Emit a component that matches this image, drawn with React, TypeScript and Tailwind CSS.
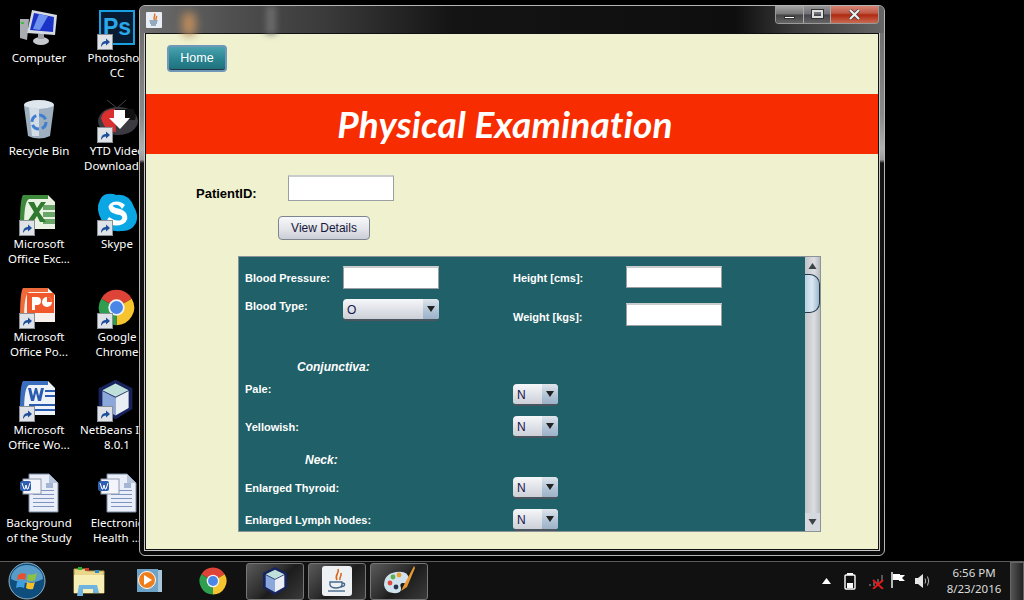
import type { ReactNode } from "react";

const ui = "font-['Noto_Sans','Liberation_Sans',sans-serif]";
const form = "font-['Liberation_Sans',Arial,sans-serif]";

function Shortcut() {
  return (
    <svg className="absolute bottom-0 left-[4px]" width="16" height="16" viewBox="0 0 16 16">
      <rect x="0.5" y="0.5" width="15" height="15" fill="#dfe3e8" stroke="#8a8f96" />
      <path d="M4 13c0-4 2-6 5-6V4.5L13 8l-4 3.5V9.5c-2 0-3.5 1-5 3.5z" fill="#1f4f9a" />
    </svg>
  );
}

function ChromeMark({ size }: { size: number }) {
  return (
    <svg width={size} height={size} viewBox="0 0 48 48">
      <path d="M24 24L8.4 15A18 18 0 0 1 39.6 15Z" fill="#dd4437" />
      <path d="M24 24L39.6 15A18 18 0 0 1 24 42Z" fill="#f6c42e" />
      <path d="M24 24L24 42A18 18 0 0 1 8.4 15Z" fill="#2f9e4f" />
      <circle cx="24" cy="24" r="8.4" fill="#f2f2f2" />
      <circle cx="24" cy="24" r="6.6" fill="#4a86e8" />
    </svg>
  );
}

function Cube({ size }: { size: number }) {
  return (
    <svg width={size} height={size} viewBox="0 0 48 48">
      <path d="M24 3L42 12V34L24 45L6 34V12Z" fill="#16235c" />
      <path d="M24 7L38 14L24 21L10 14Z" fill="#bfe0da" />
      <path d="M10 15L24 22V41L10 33Z" fill="#8aa8dc" />
      <path d="M38 15L24 22V41L38 33Z" fill="#e9eef5" />
    </svg>
  );
}

function DocIcon({ children, tone }: { children: ReactNode; tone: string }) {
  return (
    <svg width="48" height="45" viewBox="0 0 48 45">
      <path d="M8 4H33L40 11V38H18L8 36Z" fill={tone} />
      {children}
    </svg>
  );
}

const icons: Record<string, ReactNode> = {
  computer: (
    <svg width="48" height="45" viewBox="0 0 48 45">
      <path d="M5 14H14L12 35L5 33Z" fill="#a9adb2" />
      <rect x="6" y="17" width="3" height="2" fill="#3cc23c" />
      <path d="M17 5L42 10L40 30L12 28Z" fill="#d6dbe2" />
      <path d="M19 8L39 12L38 27L15 25Z" fill="#1c33c8" />
      <path d="M24 9L33 11L25 25L18 24Z" fill="#6f93ee" />
      <ellipse cx="26" cy="36" rx="8" ry="4" fill="#c7cbd0" />
      <rect x="23" y="29" width="6" height="5" fill="#9ea2a8" />
    </svg>
  ),
  recycle: (
    <svg width="48" height="45" viewBox="0 0 48 45">
      <ellipse cx="24" cy="7" rx="15" ry="5" fill="#dfe7ee" />
      <path d="M9 8L13 38Q24 43 35 38L39 8Q24 14 9 8Z" fill="#9eb0c0" />
      <path d="M14 9L17 38H24V11Z" fill="#d3dde6" />
      <circle cx="24" cy="24" r="7" fill="none" stroke="#3f7ed0" strokeWidth="3" strokeDasharray="8 3" />
    </svg>
  ),
  ytd: (
    <svg width="48" height="45" viewBox="0 0 48 45">
      <path d="M14 2L24 10L33 2" fill="none" stroke="#444" strokeWidth="1" />
      <ellipse cx="25" cy="23" rx="20" ry="14" fill="#3a3a40" />
      <path d="M8 20Q10 11 22 11L23 34Q12 34 8 20Z" fill="#d92f2f" />
      <path d="M22 11H40Q44 17 42 22H22Z" fill="#111" />
      <path d="M21 12H32V20H37L27 31L16 20H21Z" fill="#fff" />
    </svg>
  ),
  excel: (
    <DocIcon tone="#e9f2e3">
      <path d="M8 4H33V8H14Q9 10 9 36L5 34Q5 8 8 4Z" fill="#3d8a3d" />
      <rect x="28" y="14" width="12" height="5" fill="#6aa66a" />
      <rect x="28" y="21" width="12" height="5" fill="#6aa66a" />
      <rect x="28" y="28" width="12" height="5" fill="#6aa66a" />
      <path d="M13 11H19L22 17L26 11H31L24 21L31 31H25L22 25L18 31H12L19 21Z" fill="#2f7a2f" />
    </DocIcon>
  ),
  skype: (
    <svg width="48" height="45" viewBox="0 0 48 45">
      <path d="M14 3Q20 2 23 4Q36 2 41 16Q46 24 43 32Q38 41 28 40Q16 42 9 30Q2 18 7 9Q9 4 14 3Z" fill="#0aa7e4" />
      <path d="M32 14Q27 9 20 11Q13 14 17 20Q20 23 27 24Q31 26 28 29Q23 31 16 26L13 31Q21 37 30 33Q37 29 33 22Q30 18 23 17Q18 15 21 14Q26 13 29 18Z" fill="#fff" />
    </svg>
  ),
  power: (
    <DocIcon tone="#f8f0ea">
      <path d="M8 4H33V8H14Q9 10 9 36L5 34Q5 8 8 4Z" fill="#ee6a3a" />
      <rect x="12" y="9" width="27" height="20" fill="#f0572b" />
      <path d="M17 13H22Q26 13 26 17T22 21H20V26H17Z" fill="#fff" />
      <circle cx="32" cy="18" r="5" fill="#fff" />
      <path d="M32 18V13A5 5 0 0 1 37 18Z" fill="#f0572b" />
    </DocIcon>
  ),
  chrome: <ChromeMark size={47} />,
  word: (
    <DocIcon tone="#eef3fa">
      <path d="M8 4H33V8H14Q9 10 9 36L5 34Q5 8 8 4Z" fill="#3a6fc0" />
      <path d="M13 11L16 24H19L21 16L23 24H26L29 11H26L24 19L22 11H20L18 19L16 11Z" fill="#2a5cb0" />
      <rect x="30" y="13" width="10" height="2" fill="#2a5cb0" />
      <rect x="30" y="18" width="10" height="2" fill="#2a5cb0" />
      <rect x="14" y="27" width="26" height="2" fill="#2a5cb0" />
      <rect x="14" y="32" width="26" height="2" fill="#2a5cb0" />
    </DocIcon>
  ),
  cube: <Cube size={45} />,
  doc: (
    <svg width="48" height="45" viewBox="0 0 48 45">
      <path d="M14 4H34L43 13V42H14Z" fill="#e9eef8" stroke="#7b8ba5" />
      <path d="M34 4V13H43Z" fill="#b7c5dc" />
      {[20, 24, 28, 32, 36].map((y) => (
        <rect key={y} x="18" y={y} width="21" height="1" fill="#7d94c0" />
      ))}
      <rect x="31" y="13" width="7" height="5" fill="#a4b6d4" />
      <rect x="8" y="9" width="18" height="15" fill="#f3f5fa" stroke="#8f9ab0" />
      <rect x="5" y="11" width="11" height="10" rx="2" fill="#2f5fb0" />
      <path d="M7 13L9 19H10L11 15L12 19H13L15 13" fill="none" stroke="#fff" strokeWidth="1" />
    </svg>
  ),
};

function PsIcon() {
  return (
    <div className="flex h-[45px] w-[48px] items-center justify-center">
      <div className={`${form} flex h-[35px] w-[36px] items-center justify-center border-[2px] border-[#19a0e0] bg-[#071c33] text-[23px] font-bold leading-none text-[#2aa8e8]`}>
        Ps
      </div>
    </div>
  );
}

type Item = { icon: string; lines: string[]; short?: boolean };

const desktop: Item[] = [
  { icon: "computer", lines: ["Computer"] },
  { icon: "ps", lines: ["Photoshop", "CC"], short: true },
  { icon: "recycle", lines: ["Recycle Bin"] },
  { icon: "ytd", lines: ["YTD Video", "Downloader"], short: true },
  { icon: "excel", lines: ["Microsoft", "Office Exc..."], short: true },
  { icon: "skype", lines: ["Skype"], short: true },
  { icon: "power", lines: ["Microsoft", "Office Po..."], short: true },
  { icon: "chrome", lines: ["Google", "Chrome"], short: true },
  { icon: "word", lines: ["Microsoft", "Office Wo..."], short: true },
  { icon: "cube", lines: ["NetBeans IDE", "8.0.1"], short: true },
  { icon: "doc", lines: ["Background", "of the Study"] },
  { icon: "doc", lines: ["Electronic", "Health ..."] },
];

function DesktopIcon({ item }: { item: Item }) {
  return (
    <div className="flex h-[93px] w-[78px] flex-col items-center">
      <div className="relative h-[45px] w-[48px]">
        {item.icon === "ps" ? <PsIcon /> : icons[item.icon]}
        {item.short && <Shortcut />}
      </div>
      <div className={`${ui} whitespace-nowrap text-center text-[11.5px] leading-[15px] text-white`}>
        {item.lines.map((l) => (
          <div key={l}>{l}</div>
        ))}
      </div>
    </div>
  );
}

function Combo({ value, wide }: { value: string; wide?: boolean }) {
  return (
    <div className={`${form} flex h-[22px] ${wide ? "w-[96px]" : "w-[45px]"} overflow-hidden rounded-[4px] border-b-2 border-[#4a5560] bg-[linear-gradient(180deg,#f6f7f9,#dcdfe5_60%,#cdd0d7)] text-[12px] text-[#15154a]`}>
      <div className="flex flex-1 items-center pl-[4px] pt-[1px]">{value}</div>
      <div className="flex w-[16px] items-center justify-center bg-[linear-gradient(180deg,#dfe5ec,#b0c2d5_60%,#9cb2c8)]">
        <svg width="8" height="8" viewBox="0 0 8 8">
          <path d="M0 1H8L4 7Z" fill="#222" />
        </svg>
      </div>
    </div>
  );
}

function Field({ className }: { className: string }) {
  return <div className={`border border-[#9a9fa3] border-t-2 border-t-[#c9cccc] bg-white ${className}`} />;
}

function Label({ children }: { children: ReactNode }) {
  return <span className={`${form} whitespace-nowrap text-[11px] font-bold text-white`}>{children}</span>;
}

function Heading({ children, indent }: { children: ReactNode; indent: string }) {
  return (
    <div className={`${form} h-[20px] text-[12px] font-bold italic leading-[20px] text-white ${indent}`}>{children}</div>
  );
}

function ExamRow({ label, labelTop }: { label: string; labelTop: string }) {
  return (
    <div className="flex h-[22px]">
      <div className={`w-[268px] ${labelTop}`}>
        <Label>{label}</Label>
      </div>
      <Combo value="N" />
    </div>
  );
}

function Arrow({ up }: { up?: boolean }) {
  return (
    <div className="flex h-[18px] items-center justify-center">
      <svg width="9" height="8" viewBox="0 0 9 8">
        <path d={up ? "M4.5 1L8.5 7H.5Z" : "M.5 1H8.5L4.5 7Z"} fill="#3c4248" />
      </svg>
    </div>
  );
}

function TaskButton({ children }: { children: ReactNode }) {
  return (
    <div className="flex h-[37px] w-[58px] items-center justify-center rounded-[3px] border border-[#777] bg-[linear-gradient(135deg,#5a5a5a,#2c2c2c_45%,#1c1c1c_55%,#3a3a3a)]">
      {children}
    </div>
  );
}

export default function App() {
  return (
    <div className="relative flex h-[600px] w-[1024px] flex-col overflow-hidden bg-black">
      <div className="grid h-[561px] grid-cols-[78px_78px] content-start pt-[5px]">
        {desktop.map((item, i) => (
          <DesktopIcon key={i} item={item} />
        ))}
      </div>

      {/* window */}
      <div className="absolute left-[139px] top-[5px] flex h-[551px] w-[746px] flex-col overflow-hidden rounded-[6px] border border-[#b5b5b5] bg-[linear-gradient(180deg,#666_0,#8a8a8a_20%,#b0b0b0_26%,#9a9a9a_28%,#141414_28.6%,#0a0a0a_100%)] px-[5px] pb-[5px]">
        <div className="relative -mx-[5px] flex h-[27px] shrink-0 items-center bg-[linear-gradient(90deg,#6e6e6e,#505050_12%,#3a3a3a_25%,#141414_42%,#0e0e0e_80%,#3a3a3a_88%,#666)] pl-[6px]">
          <div className="absolute left-[42px] top-[6px] h-[24px] w-[14px] rounded-full bg-[#b98a5c] blur-[4px]" />
          <div className="absolute left-[126px] top-0 h-[28px] w-[10px] bg-[#6a6a6a] blur-[3px]" />
          <div className="relative flex h-[16px] w-[16px] items-center justify-center rounded-[1px] bg-[#e8eef4]">
            <svg width="14" height="14" viewBox="0 0 14 14">
              <path d="M7.5 0.5C9 3 5.5 4 7.5 7M9.5 3C10 4.5 8.5 5 9 7" fill="none" stroke="#e0701a" strokeWidth="1.4" />
              <path d="M2.5 8H10.5M3 10H10M4 12H9" stroke="#41668c" strokeWidth="1.1" />
            </svg>
          </div>
          <div className="absolute right-[5px] top-[-1px] flex h-[19px] w-[104px] overflow-hidden rounded-b-[4px] border border-t-0 border-[#9a9a9a] text-white">
            <div className="flex w-[28px] items-end justify-center border-r border-[#aaa] bg-[linear-gradient(180deg,#aaa,#777_50%,#444_55%,#666)] pb-[4px]">
              <div className="h-[3px] w-[11px] border border-[#333] bg-white" />
            </div>
            <div className="flex w-[27px] items-center justify-center border-r border-[#aaa] bg-[linear-gradient(180deg,#999,#707078_50%,#44444c_55%,#666)]">
              <div className="h-[8px] w-[11px] border-[2px] border-[#ddd] outline outline-1 outline-[#333]" />
            </div>
            <div className="flex flex-1 items-center justify-center bg-[linear-gradient(180deg,#d98877,#c05a48_45%,#b02a10_55%,#c86a50)]">
              <svg width="13" height="11" viewBox="0 0 13 11">
                <path d="M2 1L11 10M11 1L2 10" stroke="#333" strokeWidth="3.4" />
                <path d="M2 1L11 10M11 1L2 10" stroke="#eef0f4" strokeWidth="2.2" />
              </svg>
            </div>
          </div>
        </div>

        <div className={`${form} flex min-h-0 flex-1 flex-col border border-[#111] bg-[#f0f2cf] outline outline-1 outline-[#c8c8c8]`}>
          <div className="h-[60px] shrink-0 pl-[21px] pt-[11px]">
            <div className="flex h-[27px] w-[60px] items-center justify-center rounded-[4px] border-[2px] border-[#6f97b8] bg-[linear-gradient(180deg,#4aa2ae,#2c8693_50%,#206f7c)] text-[12.5px] text-white shadow-[inset_0_-1px_0_#234]">
              Home
            </div>
          </div>

          <div className="flex h-[60px] shrink-0 items-center justify-center bg-[#f72c00] pb-[1px] pr-[14px] font-['Lato',sans-serif] text-[37px] font-bold italic tracking-[0.2px] text-white">
            Physical Examination
          </div>

          <div className="flex flex-1 flex-col">
            <div className="mt-[21px] flex h-[26px] items-center pl-[50px]">
              <span className="w-[92px] pt-[12px] text-[13px] font-bold text-black">PatientID:</span>
              <Field className="h-[26px] w-[106px]" />
            </div>
            <div className="ml-[132px] mt-[15px] flex h-[24px] w-[92px] items-center justify-center rounded-[4px] border border-[#7c8590] bg-[linear-gradient(180deg,#f8f9fa,#e2e4e9_55%,#ccced6)] text-[12px] text-[#16163a]">
              View Details
            </div>

            <div className="ml-[92px] mt-[16px] flex h-[276px] w-[583px] border border-[#8a9498] bg-[#206068]">
              <div className="flex min-w-0 flex-1 flex-col pl-[6px] pt-[9px]">
                <div className="flex h-[91px] shrink-0">
                  <div className="flex w-[268px] flex-col">
                    <div className="flex h-[22px] items-center">
                      <div className="w-[98px]">
                        <Label>Blood Pressure:</Label>
                      </div>
                      <Field className="h-[23px] w-[96px]" />
                    </div>
                    <div className="mt-[11px] flex">
                      <div className="-mt-[2px] w-[98px] leading-[16px]">
                        <Label>Blood Type:</Label>
                      </div>
                      <Combo value="O" wide />
                    </div>
                  </div>
                  <div className="flex flex-col">
                    <div className="flex h-[22px] items-center">
                      <div className="w-[113px]">
                        <Label>Height [cms]:</Label>
                      </div>
                      <Field className="h-[22px] w-[96px]" />
                    </div>
                    <div className="mt-[15px] flex h-[23px] items-center">
                      <div className="w-[113px] pt-[2px]">
                        <Label>Weight [kgs]:</Label>
                      </div>
                      <Field className="h-[23px] w-[96px]" />
                    </div>
                  </div>
                </div>
                <Heading indent="ml-[52px]">Conjunctiva:</Heading>
                <div className="mt-[7px]">
                  <ExamRow label="Pale:" labelTop="-mt-[8px]" />
                </div>
                <div className="mt-[10px]">
                  <ExamRow label="Yellowish:" labelTop="-mt-[2px]" />
                </div>
                <div className="mt-[12px]">
                  <Heading indent="ml-[60px]">Neck:</Heading>
                </div>
                <div className="mt-[7px]">
                  <ExamRow label="Enlarged Thyroid:" labelTop="-mt-[2px]" />
                </div>
                <div className="mt-[10px]">
                  <ExamRow label="Enlarged Lymph Nodes:" labelTop="-mt-[2px]" />
                </div>
              </div>

              <div className="flex w-[15px] shrink-0 flex-col bg-[linear-gradient(90deg,#c0c3c8,#dcdee2_60%,#b8bbc0)]">
                <Arrow up />
                <div className="-mt-[1px] h-[39px] w-[15px] rounded-r-[10px] border border-l-0 border-[#233a4c] bg-[linear-gradient(90deg,#b8d0e4,#dbe8f2_50%,#9fb8cc)]" />
                <div className="flex-1" />
                <div className="bg-[#d5d8dc]">
                  <Arrow />
                </div>
              </div>
            </div>
          </div>
        </div>
      </div>

      {/* taskbar */}
      <div className="relative z-10 flex h-[39px] items-center border-t border-[#5c5c5c] bg-[#111]">
        <div className="ml-[8px] w-[38px]">
          <svg width="38" height="38" viewBox="0 0 38 38">
            <circle cx="19" cy="19" r="18" fill="#0f4d7c" stroke="#8fb2c8" />
            <path d="M3 17A16 14 0 0 1 35 17Q19 25 3 17Z" fill="#5a9cc8" />
            <path d="M10 13Q14 10 18 12L17 18Q13 16 9 18Z" fill="#e8502a" />
            <path d="M20 12Q24 14 29 11L27 18Q23 20 19 18Z" fill="#8cc23f" />
            <path d="M9 20Q13 18 17 20L16 26Q12 24 8 26Z" fill="#3f9fe0" />
            <path d="M19 20Q23 22 27 20L25 27Q21 28 18 26Z" fill="#f5c02c" />
          </svg>
        </div>
        <div className="ml-[27px] w-[32px]">
          <svg width="32" height="32" viewBox="0 0 32 32">
            <path d="M1 4H12L14 6H31V28H1Z" fill="#e9d68a" stroke="#b59e4f" />
            <rect x="5" y="2" width="4" height="3" fill="#2bb32b" />
            <rect x="12" y="3" width="4" height="3" fill="#d03a2a" />
            <rect x="22" y="5" width="4" height="3" fill="#2a8ad0" />
            <path d="M1 10H31V28H1Z" fill="#f7eeb6" />
            <path d="M6 20H24L26 28H20V24H10V31H4Z" fill="#6fb3e0" />
          </svg>
        </div>
        <div className="ml-[31px] w-[28px]">
          <svg width="28" height="28" viewBox="0 0 28 28">
            <rect x="6" y="3" width="20" height="22" fill="#a8c6dc" />
            <rect x="1" y="2" width="21" height="23" fill="#6ea3c8" />
            <circle cx="11" cy="13" r="8.5" fill="#ee7d1c" stroke="#fff" strokeWidth="1" />
            <path d="M8 8L16 13L8 18Z" fill="#fff" />
          </svg>
        </div>
        <div className="ml-[31px] w-[32px]">
          <ChromeMark size={36} />
        </div>
        <div className="ml-[19px] flex gap-[4px]">
          <TaskButton>
            <Cube size={32} />
          </TaskButton>
          <TaskButton>
            <div className="flex h-[30px] w-[30px] items-center justify-center rounded-[3px] bg-[#eef1f4]">
              <svg width="24" height="26" viewBox="0 0 24 26">
                <path d="M13 1C15 5 9 7 12 12M16 5C17 8 14 9 15 12" fill="none" stroke="#d9671e" strokeWidth="1.6" />
                <path d="M5 14H17V17Q16 20 11 20Q6 20 5 17ZM17 15Q21 15 19 18L16 19" fill="none" stroke="#47698c" strokeWidth="1.4" />
                <path d="M3 23H20" stroke="#47698c" strokeWidth="1.4" />
              </svg>
            </div>
          </TaskButton>
          <TaskButton>
            <svg width="34" height="32" viewBox="0 0 34 32">
              <path d="M2 20Q2 9 14 7Q26 5 27 14Q27 19 21 18Q17 18 19 23Q20 29 11 28Q3 27 2 20Z" fill="#cfe2ee" />
              <circle cx="8" cy="18" r="2.4" fill="#e04a3a" />
              <circle cx="11" cy="12" r="2.4" fill="#5bb04a" />
              <circle cx="17" cy="10" r="2.4" fill="#e8a030" />
              <circle cx="14" cy="22" r="2.4" fill="#24344a" />
              <path d="M32 1L22 20L19 26L25 22L33 3Z" fill="#e89a30" />
            </svg>
          </TaskButton>
        </div>

        <div className="ml-auto flex h-full items-center">
          <svg width="9" height="6" viewBox="0 0 9 6" className="mr-[13px]">
            <path d="M4.5 0L9 6H0Z" fill="#fff" />
          </svg>
          <svg width="12" height="17" viewBox="0 0 12 17" className="mr-[12px]">
            <rect x="3" y="0" width="6" height="2" fill="#fff" />
            <rect x="1" y="2" width="10" height="14" rx="1" fill="none" stroke="#fff" strokeWidth="1.4" />
            <rect x="3" y="10" width="6" height="5" fill="#fff" />
          </svg>
          <svg width="17" height="16" viewBox="0 0 17 16" className="mr-[6px]">
            <path d="M1 11h2v2H1zM5 9h2v4H5zM9 6h2v7H9zM13 2h2v7h-2z" fill="#555" />
            <path d="M5 7L15 16M15 7L5 16" stroke="#e01a1a" strokeWidth="2" />
          </svg>
          <svg width="15" height="18" viewBox="0 0 15 18" className="mr-[9px]">
            <path d="M1 0V16" stroke="#fff" strokeWidth="1.4" />
            <path d="M2 2H9L9 3H14L11 6L14 9H8V8H2Z" fill="#fff" />
          </svg>
          <svg width="16" height="14" viewBox="0 0 16 14" className="mr-[11px]">
            <path d="M0 4H3L8 0V14L3 10H0Z" fill="#e6e6e6" />
            <path d="M10 4.5Q11.5 7 10 9.5M12.5 2.5Q15 7 12.5 11.5" fill="none" stroke="#bbb" />
          </svg>
          <div className={`${ui} w-[64px] text-center text-[11.5px] leading-[16px] text-[#ddd]`}>
            <div>6:56 PM</div>
            <div>8/23/2016</div>
          </div>
          <div className="ml-[4px] h-full w-[14px] border-x border-t border-[#666] bg-[linear-gradient(90deg,#555,#222)]" />
        </div>
      </div>
    </div>
  );
}
